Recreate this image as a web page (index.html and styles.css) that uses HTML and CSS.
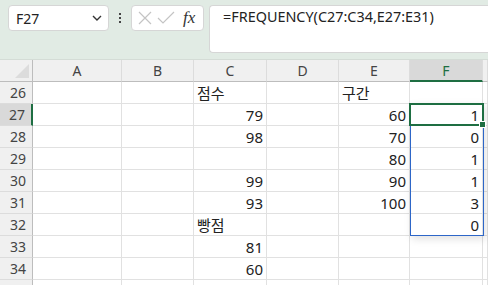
FILE: index.html
```html
<!DOCTYPE html>
<html lang="ko">
<head>
  <meta charset="UTF-8" />
  <title>FREQUENCY</title>
  <link rel="stylesheet" href="styles.css">
</head>
<body>
  <!-- Barra de fórmulas -->
  <div class="formula-bar">
    <div class="name-box">
      <span>F27</span>
      <svg class="chevron" width="10" height="6" viewBox="0 0 10 6"><path d="M1 1 L5 5 L9 1" fill="none" stroke="#333" stroke-width="1.4"/></svg>
    </div>
    <div class="dots"><i></i><i></i><i></i></div>
    <div class="fx-box">
      <svg width="16" height="16" viewBox="0 0 16 16"><path d="M2 2 L14 14 M14 2 L2 14" stroke="#c4c4c4" stroke-width="1.2"/></svg>
      <svg width="18" height="16" viewBox="0 0 18 16"><path d="M1 8 L6 13 L17 2" fill="none" stroke="#c4c4c4" stroke-width="1.2"/></svg>
      <span class="fx">fx</span>
    </div>
    <div class="formula">=FREQUENCY(C27:C34,E27:E31)</div>
  </div>

  <!-- Planilha -->
  <div class="sheet">
    <div class="grid">
      <div class="corner"><span></span></div>
      <div class="col-head">A</div>
      <div class="col-head">B</div>
      <div class="col-head">C</div>
      <div class="col-head">D</div>
      <div class="col-head">E</div>
      <div class="col-head active">F</div>
      <div class="col-head"></div>

      <div class="row-head">26</div><div class="cell"></div><div class="cell"></div><div class="cell txt">점수</div><div class="cell"></div><div class="cell txt">구간</div><div class="cell"></div><div class="cell"></div>
      <div class="row-head active">27</div><div class="cell"></div><div class="cell"></div><div class="cell num">79</div><div class="cell"></div><div class="cell num">60</div><div class="cell num">1</div><div class="cell"></div>
      <div class="row-head">28</div><div class="cell"></div><div class="cell"></div><div class="cell num">98</div><div class="cell"></div><div class="cell num">70</div><div class="cell num">0</div><div class="cell"></div>
      <div class="row-head">29</div><div class="cell"></div><div class="cell"></div><div class="cell num"></div><div class="cell"></div><div class="cell num">80</div><div class="cell num">1</div><div class="cell"></div>
      <div class="row-head">30</div><div class="cell"></div><div class="cell"></div><div class="cell num">99</div><div class="cell"></div><div class="cell num">90</div><div class="cell num">1</div><div class="cell"></div>
      <div class="row-head">31</div><div class="cell"></div><div class="cell"></div><div class="cell num">93</div><div class="cell"></div><div class="cell num">100</div><div class="cell num">3</div><div class="cell"></div>
      <div class="row-head">32</div><div class="cell"></div><div class="cell"></div><div class="cell txt">빵점</div><div class="cell"></div><div class="cell"></div><div class="cell num">0</div><div class="cell"></div>
      <div class="row-head">33</div><div class="cell"></div><div class="cell"></div><div class="cell num">81</div><div class="cell"></div><div class="cell"></div><div class="cell"></div><div class="cell"></div>
      <div class="row-head">34</div><div class="cell"></div><div class="cell"></div><div class="cell num">60</div><div class="cell"></div><div class="cell"></div><div class="cell"></div><div class="cell"></div>
      <div class="row-head"></div><div class="cell"></div><div class="cell"></div><div class="cell"></div><div class="cell"></div><div class="cell"></div><div class="cell"></div><div class="cell"></div>
    </div>
    <!-- intervalo da matriz e célula ativa -->
    <div class="array-range"></div>
    <div class="active-cell"><span class="handle"></span></div>
  </div>
</body>
</html>
```

FILE: styles.css
```css
body {
  margin: 0;
  font-family: "Noto Sans", "Open Sans", "Noto Sans CJK KR", sans-serif;
  background: #fff;
  width: 488px;
  height: 285px;
  overflow: hidden;
  color: #222;
}

/* Barra de fórmulas */
.formula-bar {
  background: #e1ebe4;
  height: 60px;
  display: flex;
  align-items: flex-start;
  padding: 5px 0 0 8px;
  box-sizing: border-box;
  border-bottom: 1px solid #d4dcd6;
}

.name-box {
  width: 101px;
  height: 26px;
  box-sizing: border-box;
  background: #fff;
  border: 1px solid #d6d6d6;
  border-radius: 4px;
  display: flex;
  align-items: center;
  justify-content: space-between;
  padding: 0 6px 0 7px;
  font-size: 14px;
}

.dots {
  width: 22px;
  height: 26px;
  display: flex;
  flex-direction: column;
  align-items: center;
  justify-content: center;
  gap: 2px;
}

.dots i {
  width: 2px;
  height: 2px;
  background: #444;
}

.fx-box {
  width: 73px;
  height: 26px;
  box-sizing: border-box;
  background: #fff;
  border: 1px solid #d6d6d6;
  border-radius: 4px;
  display: flex;
  align-items: center;
  gap: 4px;
  padding: 0 4px 0 5px;
}

.fx {
  font-family: "Liberation Serif", serif;
  font-style: italic;
  font-size: 17px;
  color: #333;
  margin-left: 4px;
}

.formula {
  margin-left: 5px;
  flex: 1;
  height: 48px;
  box-sizing: border-box;
  background: #fff;
  border: 1px solid #d6d6d6;
  border-right: none;
  border-radius: 4px 0 0 4px;
  padding: 1px 0 0 13px;
  font-size: 14.4px;
}

/* Planilha */
.sheet {
  position: relative;
  height: 225px;
  overflow: hidden;
}

.grid {
  display: grid;
  grid-template-columns: 33px 89px 72px 73px 72px 71px 73px 1fr;
  grid-template-rows: 22px repeat(10, 22px);
  font-size: 15px;
}

.corner {
  background: #f0f0f0;
  border-right: 1px solid #bdbdbd;
  border-bottom: 1px solid #bdbdbd;
  position: relative;
}

.corner span {
  position: absolute;
  right: 3px;
  bottom: 3px;
  width: 0;
  height: 0;
  border-left: 14px solid transparent;
  border-bottom: 14px solid #dcdcdc;
}

.col-head {
  background: #f0f0f0;
  border-right: 1px solid #dcdcdc;
  border-bottom: 1px solid #bdbdbd;
  text-align: center;
  font-size: 14px;
  line-height: 21px;
  color: #444;
}

.col-head.active {
  background: #d9d9d9;
  border-bottom: 2px solid #1e6e42;
  color: #1e6e42;
}

.row-head {
  background: #f0f0f0;
  border-right: 1px solid #bdbdbd;
  border-bottom: 1px solid #dcdcdc;
  text-align: right;
  padding-right: 6px;
  font-size: 14px;
  line-height: 22px;
  color: #444;
}

.row-head.active {
  background: #d9d9d9;
  border-right: 2px solid #1e6e42;
}

.cell {
  border-right: 1px solid #e1e1e1;
  border-bottom: 1px solid #e1e1e1;
  line-height: 22px;
  white-space: nowrap;
}

.cell.num {
  text-align: right;
  padding-right: 3px;
}

.cell.txt {
  padding-left: 3px;
}

.array-range {
  position: absolute;
  left: 410px;
  top: 43px;
  width: 74px;
  height: 133px;
  box-sizing: border-box;
  border: 1px solid #2d66c8;
  box-shadow: 2px 3px 8px rgba(0, 0, 0, 0.12);
}

.active-cell {
  position: absolute;
  left: 409px;
  top: 43px;
  width: 75px;
  height: 23px;
  box-sizing: border-box;
  border: 2px solid #1e6e42;
}

.handle {
  position: absolute;
  right: -4px;
  bottom: -4px;
  width: 5px;
  height: 5px;
  background: #1e6e42;
  border: 1px solid #fff;
}
```
